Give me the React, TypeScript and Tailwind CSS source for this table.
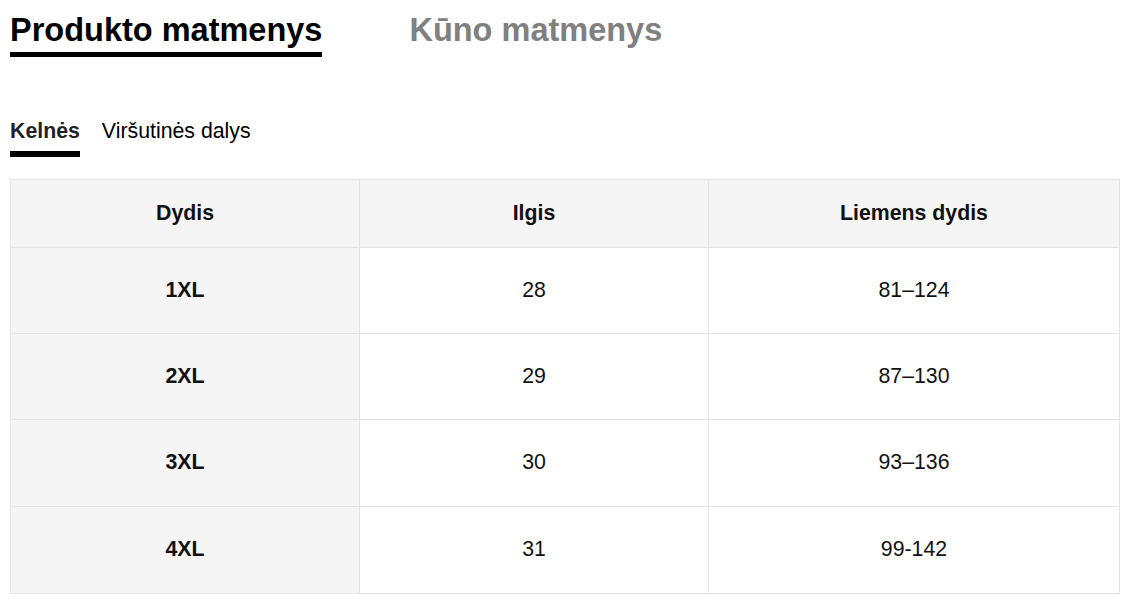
const rows = [
  { size: "1XL", length: "28", waist: "81–124", h: "h-[86px]" },
  { size: "2XL", length: "29", waist: "87–130", h: "h-[86px]" },
  { size: "3XL", length: "30", waist: "93–136", h: "h-[87px]" },
  { size: "4XL", length: "31", waist: "99-142", h: "h-[87px]" },
]

export default function App() {
  return (
    <div className="min-h-screen bg-white px-[10px] pt-[11px] text-[#111] font-['Liberation_Sans',Arial,sans-serif]">
      {/* Top tabs */}
      <div className="flex items-start gap-[87px]">
        <div className="border-b-[5px] border-black pb-[3px] text-[32.5px] font-bold leading-[38px] text-black">
          Produkto matmenys
        </div>
        <div className="text-[32.5px] font-bold leading-[38px] text-[#808080]">Kūno matmenys</div>
      </div>

      {/* Sub tabs */}
      <div className="mt-[62px] flex items-start gap-[22px] text-[21.3px] leading-[24px]">
        <div className="border-b-[6px] border-black pb-[8px] font-bold text-[#222]">Kelnės</div>
        <div className="text-black">Viršutinės dalys</div>
      </div>

      {/* Size table */}
      <table className="mt-[22px] w-[1109px] table-fixed border-collapse text-center text-[21.3px]">
        <colgroup>
          <col className="w-[349px]" />
          <col className="w-[349px]" />
          <col className="w-[411px]" />
        </colgroup>
        <thead>
          <tr className="h-[68px] bg-[#f5f5f5] font-bold">
            <th className="border border-[#e4e4e4]">Dydis</th>
            <th className="border border-[#e4e4e4]">Ilgis</th>
            <th className="border border-[#e4e4e4]">Liemens dydis</th>
          </tr>
        </thead>
        <tbody>
          {rows.map((r) => (
            <tr key={r.size} className={r.h}>
              <td className="border border-[#e4e4e4] bg-[#f5f5f5] font-bold">{r.size}</td>
              <td className="border border-[#e4e4e4]">{r.length}</td>
              <td className="border border-[#e4e4e4]">{r.waist}</td>
            </tr>
          ))}
        </tbody>
      </table>
    </div>
  )
}
